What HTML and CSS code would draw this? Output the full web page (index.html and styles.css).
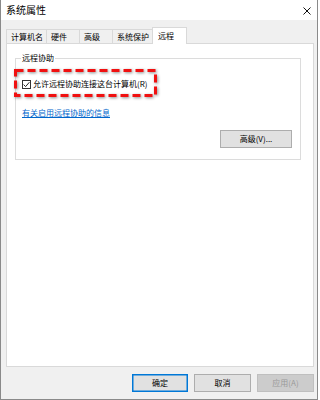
FILE: index.html
```html
<!DOCTYPE html>
<html lang="zh-CN">
<head>
<meta charset="utf-8">
<title>系统属性</title>
<link rel="stylesheet" href="styles.css">
</head>
<body>
<div class="window">
  <div class="titlebar">
    <span class="title">系统属性</span>
    <svg class="close" width="8" height="8" viewBox="0 0 8 8"><path d="M0.5 0.5 L7.5 7.5 M7.5 0.5 L0.5 7.5" stroke="#111" stroke-width="1" fill="none"/></svg>
  </div>
  <div class="dialog">
    <div class="tabs">
      <div class="tab">计算机名</div>
      <div class="tab">硬件</div>
      <div class="tab">高级</div>
      <div class="tab">系统保护</div>
      <div class="tab active">远程</div>
    </div>
    <div class="panel">
      <fieldset class="group">
        <legend class="group-label">远程协助</legend>
        <div class="check-row">
          <span class="checkbox"><svg width="7" height="7" viewBox="0 0 7 7"><path d="M0.6 3.6 L2.6 5.6 L6.4 1.2" stroke="#222" stroke-width="1" fill="none"/></svg></span>
          <span class="check-label">允许远程协助连接这台计算机(R)</span>
          <svg class="highlight" width="143" height="28" viewBox="0 0 143 28"><rect x="1.5" y="1.5" width="140" height="25" fill="none" stroke="#f01010" stroke-width="3" stroke-dasharray="8 4"/></svg>
        </div>
        <div class="link-row"><a class="link" href="#">有关启用远程协助的信息</a></div>
        <div class="btn-row"><button class="btn btn-adv">高级(V)...</button></div>
      </fieldset>
    </div>
    <div class="footer">
      <button class="btn btn-default">确定</button>
      <button class="btn">取消</button>
      <button class="btn btn-disabled">应用(A)</button>
    </div>
  </div>
</div>
</body>
</html>
```

FILE: styles.css
```css
* { box-sizing: border-box; }
html, body { margin: 0; padding: 0; background: #ffffff; }
body {
  font-family: "Noto Sans CJK SC", "Noto Sans", sans-serif;
  font-size: 8px;
  color: #000;
}
.window {
  width: 318px;
  height: 400px;
  border: 1px solid #8a8a8a;
  border-top: none;
  display: flex;
  flex-direction: column;
  background: #f0f0f0;
}
.titlebar {
  height: 20px;
  background: #ffffff;
  display: flex;
  align-items: center;
  justify-content: space-between;
  padding: 0 4px 0 5px;
}
.title { font-size: 10px; line-height: 12px; }
.close { display: block; margin-right: 2px; margin-top: 1px; }
.dialog {
  flex: 1;
  display: flex;
  flex-direction: column;
  padding: 7px 3px 0 5px;
}
.tabs {
  display: flex;
  align-items: flex-end;
  height: 16px;
}
.tab {
  min-width: 33px;
  height: 14px;
  padding: 0 3px 0 4px;
  border: 1px solid #d9d9d9;
  border-bottom: none;
  border-right: none;
  background: #f0f0f0;
  line-height: 13px;
  white-space: nowrap;
}
.tab:nth-child(4) { border-right: none; }
.tab.active {
  height: 17px;
  margin-bottom: -1px;
  padding: 1px 4px 0 5px;
  background: #ffffff;
  border-right: 1px solid #d9d9d9;
  position: relative;
  z-index: 1;
  min-width: 35px;
}
.panel {
  height: 324px;
  width: 308px;
  border: 1px solid #d9d9d9;
  background: #ffffff;
  padding-top: 9px;
}
.group {
  margin: 0 12px 0 8px;
  border: 1px solid #dcdcdc;
  padding: 0 8px 11px 6px;
  min-width: 0;
}
.group-label {
  padding: 0 1px;
  margin-left: -1px;
  line-height: 10px;
  font-size: 8px;
}
.check-row {
  position: relative;
  margin-top: 15px;
  height: 12px;
  display: flex;
  align-items: center;
  gap: 2px;
  line-height: 12px;
}
.checkbox {
  width: 9px;
  height: 9px;
  border: 1px solid #333;
  background: #fff;
  display: flex;
  align-items: center;
  justify-content: center;
}
.checkbox svg { display: block; }
.highlight {
  position: absolute;
  left: -8px;
  top: -9px;
  overflow: visible;
  filter: drop-shadow(1px 1.5px 1.5px rgba(0,0,0,0.45));
}
.link-row { margin-top: 17px; line-height: 12px; height: 12px; }
.link { color: #0066cc; text-decoration: underline; }
.btn-row { margin-top: 11px; display: flex; justify-content: flex-end; }
.btn {
  font-family: inherit;
  font-size: 8px;
  color: #000;
  height: 18px;
  width: 57px;
  padding: 0;
  margin: 0;
  background: #e1e1e1;
  border: 1px solid #adadad;
  border-radius: 0;
  line-height: 16px;
}
.btn-adv { width: 72px; }
.btn-default { border-color: #0078d7; box-shadow: inset 0 0 0 0.5px #0078d7; width: 56px; }
.btn-disabled { background: #cccccc; border-color: #bfbfbf; color: #9a9a9a; }
.footer {
  display: flex;
  justify-content: flex-end;
  gap: 6px;
  margin-top: 7px;
  padding-right: 0;
}
```
